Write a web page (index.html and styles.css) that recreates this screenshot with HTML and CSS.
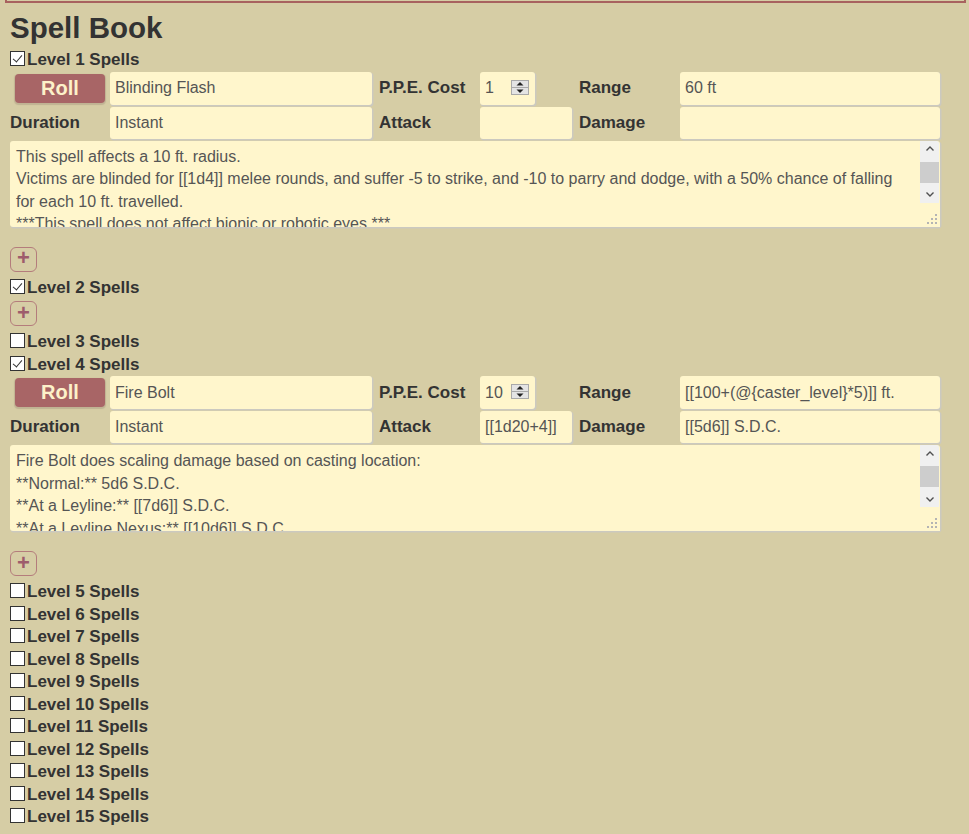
FILE: index.html
```html
<!DOCTYPE html>
<html lang="en">
<head>
<meta charset="utf-8">
<title>Spell Book</title>
<link rel="stylesheet" href="styles.css">
</head>
<body>
<div class="topbar"></div>
<main class="sheet">
  <h1 class="title">Spell Book</h1>

  <section class="level">
    <label class="level-head"><input type="checkbox" class="toggle" checked><span>Level 1 Spells</span></label>
    <div class="spell">
      <div class="cell cell-center"><button class="roll" type="button">Roll</button></div>
      <input class="field" type="text" value="Blinding Flash">
      <span class="label label-mid">P.P.E. Cost</span>
      <div class="cell"><input class="field num" type="number" value="1"><span class="spin" aria-hidden="true"><svg width="18" height="15" viewBox="0 0 18 15"><rect x="0.5" y="0.5" width="17" height="14" fill="#e4e4e4" stroke="#a9a9a9"/><line x1="1" y1="7.5" x2="17" y2="7.5" stroke="#a9a9a9"/><polygon points="5.5,5.5 12.5,5.5 9,2" fill="#222"/><polygon points="5.5,9.5 12.5,9.5 9,13" fill="#222"/></svg></span></div>
      <span class="label label-mid">Range</span>
      <input class="field" type="text" value="60 ft">
      <span class="label">Duration</span>
      <input class="field" type="text" value="Instant">
      <span class="label label-mid">Attack</span>
      <input class="field" type="text" value="">
      <span class="label label-mid">Damage</span>
      <input class="field" type="text" value="">
      <div class="desc-wrap">
        <textarea class="desc">This spell affects a 10 ft. radius.
Victims are blinded for [[1d4]] melee rounds, and suffer -5 to strike, and -10 to parry and dodge, with a 50% chance of falling for each 10 ft. travelled.
***This spell does not affect bionic or robotic eyes.***

Saving Throw: Standard.
Range: 60 ft.</textarea>
        <div class="vscroll" aria-hidden="true">
          <span class="sbtn"><svg width="10" height="10" viewBox="0 0 10 10"><path d="M1.5 6.5 L5 3 L8.5 6.5" fill="none" stroke="#505050" stroke-width="1.4"/></svg></span>
          <span class="strack"><span class="sthumb"></span></span>
          <span class="sbtn"><svg width="10" height="10" viewBox="0 0 10 10"><path d="M1.5 3.5 L5 7 L8.5 3.5" fill="none" stroke="#505050" stroke-width="1.4"/></svg></span>
        </div>
      </div>
    </div>
    <button class="add" type="button">+</button>
  </section>

  <section class="level">
    <label class="level-head"><input type="checkbox" class="toggle" checked><span>Level 2 Spells</span></label>
    <button class="add" type="button">+</button>
  </section>

  <section class="level">
    <label class="level-head"><input type="checkbox" class="toggle"><span>Level 3 Spells</span></label>
  </section>

  <section class="level">
    <label class="level-head"><input type="checkbox" class="toggle" checked><span>Level 4 Spells</span></label>
    <div class="spell">
      <div class="cell cell-center"><button class="roll" type="button">Roll</button></div>
      <input class="field" type="text" value="Fire Bolt">
      <span class="label label-mid">P.P.E. Cost</span>
      <div class="cell"><input class="field num" type="number" value="10"><span class="spin" aria-hidden="true"><svg width="18" height="15" viewBox="0 0 18 15"><rect x="0.5" y="0.5" width="17" height="14" fill="#e4e4e4" stroke="#a9a9a9"/><line x1="1" y1="7.5" x2="17" y2="7.5" stroke="#a9a9a9"/><polygon points="5.5,5.5 12.5,5.5 9,2" fill="#222"/><polygon points="5.5,9.5 12.5,9.5 9,13" fill="#222"/></svg></span></div>
      <span class="label label-mid">Range</span>
      <input class="field" type="text" value="[[100+(@{caster_level}*5)]] ft.">
      <span class="label">Duration</span>
      <input class="field" type="text" value="Instant">
      <span class="label label-mid">Attack</span>
      <input class="field" type="text" value="[[1d20+4]]">
      <span class="label label-mid">Damage</span>
      <input class="field" type="text" value="[[5d6]] S.D.C.">
      <div class="desc-wrap">
        <textarea class="desc">Fire Bolt does scaling damage based on casting location:
**Normal:** 5d6 S.D.C.
**At a Leyline:** [[7d6]] S.D.C.
**At a Leyline Nexus:** [[10d6]] S.D.C.

Range increases by 5 ft. per level of experience.</textarea>
        <div class="vscroll" aria-hidden="true">
          <span class="sbtn"><svg width="10" height="10" viewBox="0 0 10 10"><path d="M1.5 6.5 L5 3 L8.5 6.5" fill="none" stroke="#505050" stroke-width="1.4"/></svg></span>
          <span class="strack"><span class="sthumb"></span></span>
          <span class="sbtn"><svg width="10" height="10" viewBox="0 0 10 10"><path d="M1.5 3.5 L5 7 L8.5 3.5" fill="none" stroke="#505050" stroke-width="1.4"/></svg></span>
        </div>
      </div>
    </div>
    <button class="add" type="button">+</button>
  </section>

  <section class="level">
    <label class="level-head"><input type="checkbox" class="toggle"><span>Level 5 Spells</span></label>
    <label class="level-head"><input type="checkbox" class="toggle"><span>Level 6 Spells</span></label>
    <label class="level-head"><input type="checkbox" class="toggle"><span>Level 7 Spells</span></label>
    <label class="level-head"><input type="checkbox" class="toggle"><span>Level 8 Spells</span></label>
    <label class="level-head"><input type="checkbox" class="toggle"><span>Level 9 Spells</span></label>
    <label class="level-head"><input type="checkbox" class="toggle"><span>Level 10 Spells</span></label>
    <label class="level-head"><input type="checkbox" class="toggle"><span>Level 11 Spells</span></label>
    <label class="level-head"><input type="checkbox" class="toggle"><span>Level 12 Spells</span></label>
    <label class="level-head"><input type="checkbox" class="toggle"><span>Level 13 Spells</span></label>
    <label class="level-head"><input type="checkbox" class="toggle"><span>Level 14 Spells</span></label>
    <label class="level-head"><input type="checkbox" class="toggle"><span>Level 15 Spells</span></label>
  </section>
</main>
</body>
</html>
```

FILE: styles.css
```css
html, body {
  margin: 0;
  padding: 0;
  background: #d6cda5;
  font-family: "Liberation Sans", Arial, sans-serif;
  color: #333;
  overflow: hidden;
}

.topbar {
  height: 1px;
  margin: 0 3px 0 5px;
  border: 2px solid #a8625f;
  border-top: none;
}

.sheet {
  padding: 0 0 0 10px;
}

.title {
  margin: 9px 0 5px;
  font-size: 29.5px;
  line-height: 32px;
  font-weight: bold;
  color: #333;
}

.level-head {
  display: flex;
  align-items: center;
  height: 22.5px;
  font-size: 17px;
  font-weight: bold;
  color: #333;
}

.toggle {
  appearance: none;
  -webkit-appearance: none;
  box-sizing: border-box;
  width: 15px;
  height: 15px;
  min-width: 15px;
  margin: -3px 2px 0 0;
  border: 1px solid #333;
  background: #fff;
  position: relative;
  flex: none;
}

.toggle:checked::after {
  content: "";
  position: absolute;
  left: 4px;
  top: 1px;
  width: 4px;
  height: 8px;
  border: solid #333;
  border-width: 0 1.5px 1.5px 0;
  transform: rotate(40deg);
}

.spell {
  display: grid;
  grid-template-columns: 100px 262px 108px 92px 108px 260px;
  grid-template-rows: 33px 32px 86px;
  row-gap: 2px;
  width: 930px;
  margin: 0 0 20px;
}

.cell {
  display: flex;
  align-items: stretch;
  position: relative;
}

.cell-center {
  align-items: center;
  justify-content: center;
}

.label {
  display: flex;
  align-items: center;
  font-size: 17px;
  font-weight: bold;
  color: #333;
}

.label-mid {
  padding-left: 7px;
}

.field {
  box-sizing: border-box;
  width: 100%;
  height: 100%;
  margin: 0;
  padding: 0 5px;
  border: none;
  border-radius: 3px;
  background: #fff6cc;
  box-shadow: 1px 1px 0 0.5px #cbc9c0;
  font-family: "Liberation Sans", Arial, sans-serif;
  font-size: 16px;
  color: #555;
  outline: none;
}

.num {
  width: 55px;
  -moz-appearance: textfield;
}

.num::-webkit-inner-spin-button,
.num::-webkit-outer-spin-button {
  -webkit-appearance: none;
  margin: 0;
}

.spin {
  position: absolute;
  left: 31px;
  top: 8px;
  width: 18px;
  height: 15px;
  line-height: 0;
}

.roll {
  width: 90px;
  height: 29px;
  padding: 0;
  border: none;
  border-radius: 4px;
  background: #a86566;
  box-shadow: 0 1px 1px 0.5px #c0b393;
  color: #fdf1c9;
  font-family: "Liberation Sans", Arial, sans-serif;
  font-size: 20px;
  font-weight: bold;
  cursor: pointer;
}

.desc-wrap {
  grid-column: 1 / -1;
  position: relative;
  display: flex;
}

.desc {
  box-sizing: border-box;
  width: 100%;
  height: 100%;
  margin: 0;
  padding: 5px 25px 5px 6px;
  border: none;
  border-radius: 3px;
  background: #fff6cc;
  box-shadow: 1px 1px 0 0.5px #cbc9c0;
  font-family: "Liberation Sans", Arial, sans-serif;
  font-size: 16px;
  line-height: 22.5px;
  color: #555;
  overflow: hidden;
  resize: vertical;
  outline: none;
}

.desc::-webkit-resizer {
  background-color: #fff6cc;
  background-repeat: no-repeat;
  background-position: right 2px bottom 2px;
  background-image: url("data:image/svg+xml,%3Csvg xmlns='http://www.w3.org/2000/svg' width='11' height='11' viewBox='0 0 11 11'%3E%3Cg fill='%23b4b4b4'%3E%3Crect x='8' y='0' width='2' height='2'/%3E%3Crect x='4' y='4' width='2' height='2'/%3E%3Crect x='8' y='4' width='2' height='2'/%3E%3Crect x='0' y='8' width='2' height='2'/%3E%3Crect x='4' y='8' width='2' height='2'/%3E%3Crect x='8' y='8' width='2' height='2'/%3E%3C/g%3E%3C/svg%3E");
}

.vscroll {
  position: absolute;
  top: 0;
  right: 1px;
  width: 19px;
  height: 62px;
  display: flex;
  flex-direction: column;
  background: #f0f0f0;
  border-top-right-radius: 3px;
}

.sbtn {
  height: 17px;
  display: flex;
  align-items: center;
  justify-content: center;
  flex: none;
}

.strack {
  flex: 1;
  display: flex;
  flex-direction: column;
  padding-top: 4px;
}

.sthumb {
  height: 21px;
  background: #cdcdcd;
}

.add {
  display: flex;
  align-items: center;
  justify-content: center;
  box-sizing: border-box;
  width: 27px;
  height: 25px;
  margin: 0 0 5px;
  padding: 0 0 2px;
  border: 1px solid #b47c7c;
  border-radius: 6px;
  background: transparent;
  color: #9e5c6c;
  font-family: "Liberation Sans", Arial, sans-serif;
  font-size: 22px;
  font-weight: bold;
  line-height: 1;
  cursor: pointer;
}

.level-head + .add {
  margin-top: 2px;
}
```
